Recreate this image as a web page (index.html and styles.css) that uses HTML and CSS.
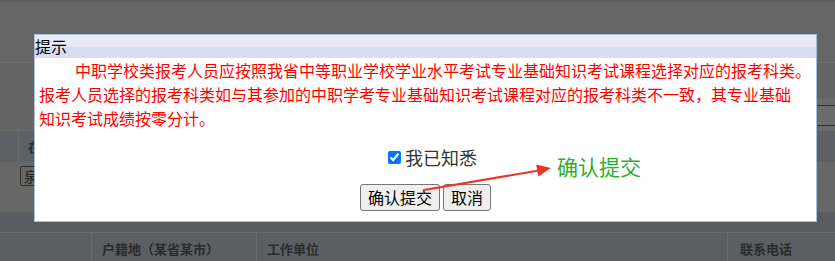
FILE: index.html
```html
<!DOCTYPE html>
<html lang="zh-CN">
<head>
<meta charset="utf-8">
<title>提示</title>
<link rel="stylesheet" href="styles.css">
</head>
<body>
<div class="page">
  <div class="band band-top"></div>
  <div class="band band-tools">
    <div class="tools-upper"></div>
    <div class="tools-lower">
      <div class="tool-block"><div class="tool-input"></div></div>
    </div>
  </div>
  <div class="band band-head1">
    <div class="cell c-narrow"></div>
    <div class="cell c-text">在</div>
  </div>
  <div class="band band-row">
    <div class="fake-select">泉州市</div>
  </div>
  <div class="band band-gap"></div>
  <div class="band band-head2">
    <div class="hcell h1"></div>
    <div class="hcell h2">户籍地（某省某市）</div>
    <div class="hcell h3">工作单位</div>
    <div class="hcell h4">联系电话</div>
  </div>
</div>

<div class="dialog">
  <div class="dialog-title">提示</div>
  <div class="dialog-text">中职学校类报考人员应按照我省中等职业学校学业水平考试专业基础知识考试课程选择对应的报考科类。<br>报考人员选择的报考科类如与其参加的中职学考专业基础知识考试课程对应的报考科类不一致，其专业基础<br>知识考试成绩按零分计。</div>
  <label class="agree"><input type="checkbox" checked><span>我已知悉</span></label>
  <div class="actions">
    <button class="btn btn-ok">确认提交</button>
    <button class="btn btn-cancel">取消</button>
  </div>
</div>

<svg class="arrow" width="140" height="40" viewBox="0 0 140 40">
  <line x1="4" y1="30" x2="119" y2="10.5" stroke="#ee3324" stroke-width="2.2" stroke-linecap="round"/>
  <polygon points="131,8 116.2,4.6 118.3,16.4" fill="#ee3324"/>
</svg>
<div class="note">确认提交</div>
</body>
</html>
```

FILE: styles.css
```css
html, body {
  margin: 0;
  padding: 0;
}
body {
  width: 835px;
  height: 261px;
  overflow: hidden;
  position: relative;
  font-family: "Noto Sans CJK SC", "Microsoft YaHei", sans-serif;
  background: #666666;
}
.page {
  display: flex;
  flex-direction: column;
}
.band {
  width: 835px;
  box-sizing: border-box;
}
.band-top {
  height: 63px;
  background: #666666;
  border-top: 2px solid #5c5c5c;
  border-bottom: 1px solid #6d6d6d;
}
.band-tools {
  height: 67px;
  background: #646464;
  display: flex;
  flex-direction: column;
}
.tools-upper {
  height: 35px;
}
.tools-lower {
  flex: 1;
  display: flex;
  justify-content: flex-end;
}
.tool-block {
  width: 46px;
  background: #6a6a6a;
  padding: 7px 0 0 12px;
  box-sizing: border-box;
}
.tool-input {
  height: 19px;
  border: 1px solid #2e2e2e;
  border-right: none;
  background: #6b6b6b;
}
.band-head1 {
  height: 33px;
  background: #5d6064;
  border-top: 1px solid #6a6a6a;
  border-bottom: 1px solid #6a6a6a;
  display: flex;
}
.cell {
  height: 100%;
}
.c-narrow {
  width: 18px;
  border-right: 1px solid #6b6b6b;
}
.c-text {
  padding-left: 9px;
  font-size: 13px;
  font-weight: 700;
  color: #2a2a2a;
  line-height: 32px;
}
.band-row {
  height: 49px;
  background: #676767;
  padding: 3px 0 0 20px;
}
.fake-select {
  width: 140px;
  height: 20px;
  box-sizing: border-box;
  border: 1px solid #2d2d2d;
  border-radius: 2px;
  padding-left: 3px;
  font-size: 14px;
  line-height: 18px;
  color: #1a1a1a;
}
.band-gap {
  height: 21px;
  background: #595c60;
  border-bottom: 1px solid #6b6b6b;
}
.band-head2 {
  height: 28px;
  background: #5b5e62;
  display: flex;
}
.hcell {
  height: 100%;
  box-sizing: border-box;
  font-size: 13px;
  font-weight: 700;
  color: #2b2b2b;
  line-height: 32px;
  white-space: nowrap;
}
.h1 { width: 92px; border-right: 1px solid #666a6e; }
.h2 { width: 165px; border-right: 1px solid #666a6e; padding-left: 10px; }
.h3 { width: 471px; border-right: 1px solid #666a6e; padding-left: 10px; }
.h4 { flex: 1; padding-left: 12px; }

.dialog {
  position: absolute;
  left: 34px;
  top: 34px;
  width: 783px;
  height: 188px;
  box-sizing: border-box;
  border: 1px solid #a7bfd7;
  background: #ffffff;
}
.dialog-title {
  height: 23px;
  line-height: 23px;
  font-size: 16px;
  color: #000000;
  background: linear-gradient(to bottom, #eaeef8 0%, #e4e9f5 50%, #d5ddf1 55%, #d6dff2 100%);
}
.dialog-text {
  padding: 0 4px;
  font-size: 16px;
  line-height: 24px;
  color: #ff0000;
  text-indent: 36px;
  white-space: nowrap;
}
.agree {
  margin-top: 14px;
  height: 26px;
  display: flex;
  justify-content: center;
  align-items: center;
  gap: 4px;
  padding-left: 14px;
  font-size: 18px;
  color: #333333;
}
.agree input {
  width: 13px;
  height: 13px;
  margin: 0;
}
.actions {
  margin-top: 14px;
  display: flex;
  justify-content: center;
  gap: 3px;
}
.btn {
  height: 27px;
  padding: 0 7px;
  font-family: "Noto Sans CJK SC", "Microsoft YaHei", sans-serif;
  font-size: 16px;
  line-height: 25px;
  color: #000000;
  background: #efefef;
  border: 1px solid #767676;
  border-radius: 3px;
}
.arrow {
  position: absolute;
  left: 420px;
  top: 160px;
}
.note {
  position: absolute;
  left: 557px;
  top: 154px;
  font-size: 21px;
  line-height: 24px;
  color: #2bb02b;
  white-space: nowrap;
}
```
